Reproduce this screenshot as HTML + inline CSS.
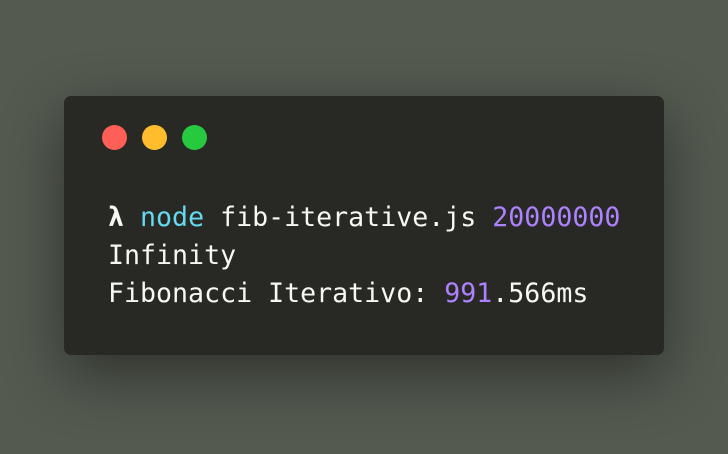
<!DOCTYPE html>
<html><head><style>
html,body{margin:0;padding:0}
body{width:728px;height:454px;overflow:hidden;background:#545a50;position:relative}
.win{position:absolute;left:64px;top:96px;width:600px;height:259px;background:#282824;border-radius:7px;box-shadow:0 20px 60px rgba(0,0,0,.45)}
.dot{position:absolute;top:29px;width:25px;height:25px;border-radius:50%}
pre{position:absolute;left:44px;top:103px;margin:0;font-family:"DejaVu Sans Mono","Liberation Mono",monospace;font-size:26.6px;line-height:38px;color:#f8f8f2}
.c{color:#66d9ef}.p{color:#ae81ff}
</style></head><body>
<div class="win">
<div class="dot" style="left:37.5px;background:#ff5f56"></div>
<div class="dot" style="left:77.5px;background:#ffbd2e"></div>
<div class="dot" style="left:117.5px;background:#27c93f"></div>
<pre><b>λ</b> <span class="c">node</span> fib-iterative.js <span class="p">20000000</span>
Infinity
Fibonacci Iterativo: <span class="p">991</span>.566ms</pre>
</div>
</body></html>
